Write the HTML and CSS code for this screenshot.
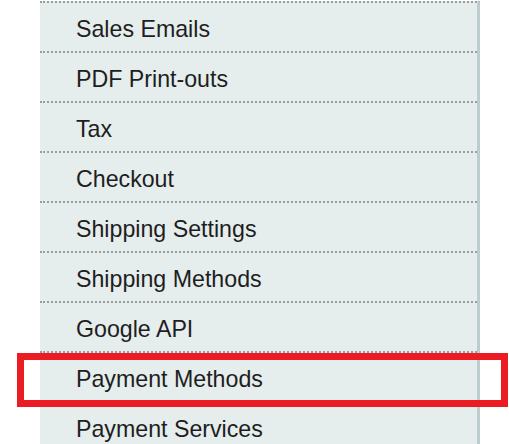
FILE: index.html
```html
<!DOCTYPE html>
<html>
<head>
<meta charset="utf-8">
<link rel="stylesheet" href="styles.css">
</head>
<body>
<div class="page">
  <ul class="menu">
    <li class="item">Sales Emails</li>
    <li class="item">PDF Print-outs</li>
    <li class="item">Tax</li>
    <li class="item">Checkout</li>
    <li class="item">Shipping Settings</li>
    <li class="item">Shipping Methods</li>
    <li class="item">Google API</li>
    <li class="item">Payment Methods</li>
    <li class="item">Payment Services</li>
  </ul>
  <div class="highlight"></div>
</div>
</body>
</html>
```
FILE: styles.css
```css
html, body {
  margin: 0;
  padding: 0;
  background: #ffffff;
}
.page {
  position: relative;
  width: 509px;
  height: 444px;
  overflow: hidden;
  padding-left: 40px;
  box-sizing: border-box;
}
.menu {
  list-style: none;
  margin: 0;
  padding: 0;
  width: 437px;
  background: #e6eded;
  border-right: 3px solid #bccccf;
  border-top: 2px dotted #9a9e9e;
  margin-top: 1px;
}
.item {
  height: 48px;
  border-bottom: 2px dotted #9a9e9e;
  padding-left: 36px;
  font-family: "Liberation Sans", Arial, sans-serif;
  font-size: 23.2px;
  line-height: 53px;
  color: #1e1e1e;
}
.highlight {
  position: absolute;
  left: 17px;
  top: 353px;
  width: 491px;
  height: 54px;
  box-sizing: border-box;
  border: 7px solid #ec1c24;
}
```
